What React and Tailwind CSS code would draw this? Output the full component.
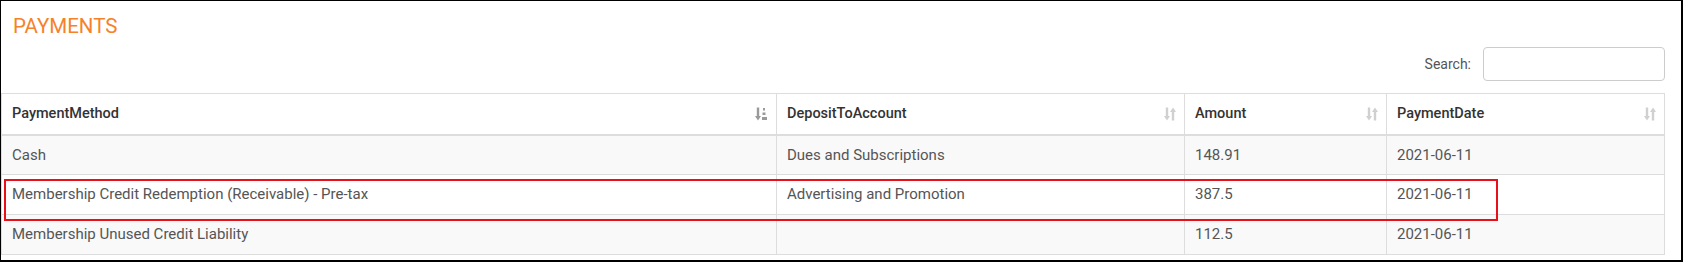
import React from "react"

const rows = [
  { method: "Cash", account: "Dues and Subscriptions", amount: "148.91", date: "2021-06-11" },
  { method: "Membership Credit Redemption (Receivable) - Pre-tax", account: "Advertising and Promotion", amount: "387.5", date: "2021-06-11" },
  { method: "Membership Unused Credit Liability", account: "", amount: "112.5", date: "2021-06-11" },
]

const columns = ["PaymentMethod", "DepositToAccount", "Amount", "PaymentDate"]

// unsorted column: down arrow + up arrow
function SortBoth() {
  return (
    <svg width="12" height="14" viewBox="0 0 12 14" className="text-[#d0d0d0]" fill="currentColor">
      <rect x="1.8" y="0.5" width="2.4" height="9" />
      <path d="M0 9h6l-3 4.5z" />
      <rect x="7.8" y="4.5" width="2.4" height="9" />
      <path d="M6 5h6l-3-4.5z" />
    </svg>
  )
}

// ascending sort: down arrow with stepped bars
function SortAsc() {
  return (
    <svg width="13" height="14" viewBox="0 0 13 14" className="text-[#9a9a9a]" fill="currentColor">
      <rect x="1.8" y="0.5" width="2.4" height="9" />
      <path d="M0 9h6l-3 4.5z" />
      <rect x="8" y="1" width="2" height="2.5" />
      <rect x="7.5" y="5.5" width="3" height="2.5" />
      <rect x="7" y="10" width="5" height="3" />
    </svg>
  )
}

export default function App() {
  return (
    <div className="relative w-[1683px] h-[262px] border-l border-t border-r-2 border-b-2 border-black bg-white font-['Roboto','Liberation_Sans',sans-serif]">
      <div className="pt-[11px] pr-[16px]">
        <h2 className="pl-[12px] text-[20.5px] leading-[28px] text-[#f5822a]">PAYMENTS</h2>

        <div className="mt-[7px] flex items-center justify-end gap-[12px]">
          <label className="text-[14px] text-[#555]">Search:</label>
          <input type="search" className="w-[182px] h-[34px] rounded-[4px] border border-[#ccc] bg-white" />
        </div>

        <table className="mt-[12px] w-[1663px] table-fixed border-collapse">
          <colgroup>
            <col className="w-[775px]" />
            <col className="w-[408px]" />
            <col className="w-[202px]" />
            <col className="w-[278px]" />
          </colgroup>
          <thead>
            <tr className="h-[41px]">
              {columns.map((c, i) => (
                <th key={c} className="border border-b-2 border-[#ddd] px-[10px] text-left text-[14.5px] font-medium text-[#333]">
                  <div className="flex items-center justify-between">
                    <span>{c}</span>
                    <span className="mr-[-2px]">{i === 0 ? <SortAsc /> : <SortBoth />}</span>
                  </div>
                </th>
              ))}
            </tr>
          </thead>
          <tbody>
            {rows.map((r, i) => (
              <tr key={i} className={`h-[40px] ${i % 2 === 0 ? "bg-[#f9f9f9]" : "bg-white"}`}>
                <td className="border border-[#ddd] px-[10px] text-[15px] text-[#555]">{r.method}</td>
                <td className="border border-[#ddd] px-[10px] text-[15px] text-[#555]">{r.account}</td>
                <td className="border border-[#ddd] px-[10px] text-[15px] text-[#555]">{r.amount}</td>
                <td className="border border-[#ddd] px-[10px] text-[15px] text-[#555]">{r.date}</td>
              </tr>
            ))}
          </tbody>
        </table>
      </div>

      {/* highlight around the second row */}
      <div className="pointer-events-none absolute left-[3px] top-[178px] w-[1494px] h-[42px] border-2 border-[#e8111a]" />
    </div>
  )
}
